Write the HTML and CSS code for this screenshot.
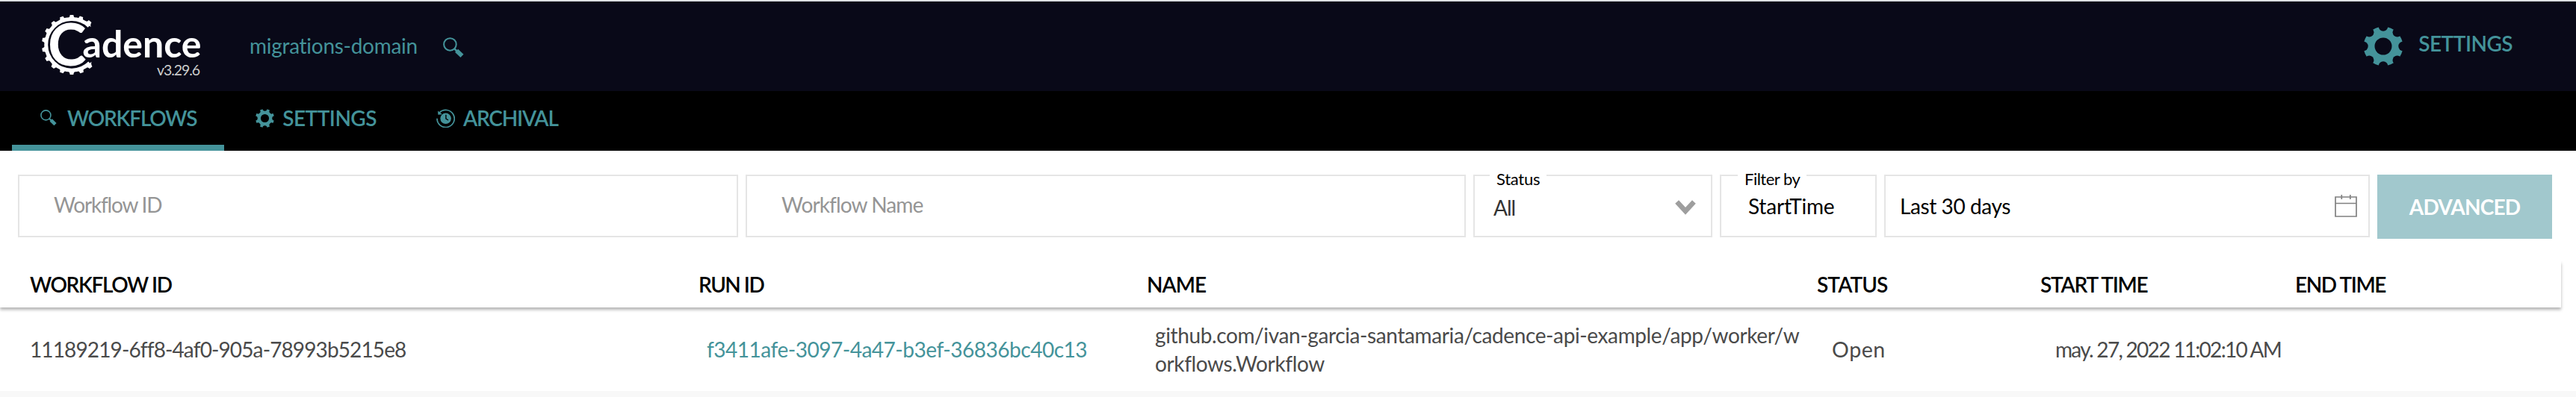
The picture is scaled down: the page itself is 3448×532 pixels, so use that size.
FILE: index.html
```
<!DOCTYPE html>
<html lang="en">
<head>
<meta charset="utf-8">
<title>Cadence</title>
<link rel="stylesheet" href="styles.css">
</head>
<body>
<svg class="defs" width="0" height="0">
  <defs>
    <mask id="gear-mask" maskUnits="userSpaceOnUse" x="-27" y="-27" width="54" height="54">
      <circle r="26.3" fill="#fff"/>
      <circle r="11.5" fill="#000"/>
      <circle cx="26.5" r="6.2" fill="#000"/>
      <circle cx="26.5" r="6.2" fill="#000" transform="rotate(45)"/>
      <circle cx="26.5" r="6.2" fill="#000" transform="rotate(90)"/>
      <circle cx="26.5" r="6.2" fill="#000" transform="rotate(135)"/>
      <circle cx="26.5" r="6.2" fill="#000" transform="rotate(180)"/>
      <circle cx="26.5" r="6.2" fill="#000" transform="rotate(225)"/>
      <circle cx="26.5" r="6.2" fill="#000" transform="rotate(270)"/>
      <circle cx="26.5" r="6.2" fill="#000" transform="rotate(315)"/>
    </mask>
    <symbol id="gear" viewBox="-26 -26 52 52"><rect x="-27" y="-27" width="54" height="54" mask="url(#gear-mask)"/></symbol>
    <symbol id="search" viewBox="0 0 22 22">
      <circle cx="7.4" cy="7.4" r="6.5" fill="none" stroke="currentColor" stroke-width="1.6"/>
      <path d="M11.8 11.8 15 15" stroke="currentColor" stroke-width="2"/>
      <path d="M14.2 14 20 19.6" stroke="currentColor" stroke-width="4.6"/>
    </symbol>
    <path id="tooth" d="M-5.6-34.5C-3.6-36-2.8-37-2.3-40H2.3C2.8-37 3.6-36 5.6-34.5Z"/>
  </defs>
</svg>
<header class="header">
  <svg class="logo" viewBox="56 18 214 88">
    <path d="M119.4 34.8A34.3 34.3 0 1 0 120 84.4" fill="none" stroke="#fff" stroke-width="5"/>
    <g fill="#fff" transform="translate(96 60)">
      <use href="#tooth" transform="rotate(38)"/><use href="#tooth" transform="rotate(19)"/><use href="#tooth"/>
      <use href="#tooth" transform="rotate(-20)"/><use href="#tooth" transform="rotate(-40)"/><use href="#tooth" transform="rotate(-60)"/>
      <use href="#tooth" transform="rotate(-80)"/><use href="#tooth" transform="rotate(-100)"/><use href="#tooth" transform="rotate(-120)"/>
      <use href="#tooth" transform="rotate(-140)"/><use href="#tooth" transform="rotate(-160)"/><use href="#tooth" transform="rotate(-180)"/>
      <use href="#tooth" transform="rotate(-200)"/><use href="#tooth" transform="rotate(-220)"/>
    </g>
    <text class="logo-c" x="64" y="87.8">C</text>
    <text class="logo-word" x="110.500" y="76.5" textLength="159">adence</text>
    <text class="logo-version" x="210" y="100.5" textLength="58">v3.29.6</text>
  </svg>
  <a class="domain"><span class="t-domain">migrations-domain</span></a>
  <svg class="domain-search"><use href="#search"/></svg>
  <a class="global-settings"><svg class="gear-lg"><use href="#gear"/></svg><span class="t-settings">SETTINGS</span></a>
</header>
<nav class="tabs">
  <a class="tab tab-active"><svg class="tab-search"><use href="#search"/></svg><span class="t-workflows">WORKFLOWS</span></a>
  <a class="tab"><svg class="tab-gear"><use href="#gear"/></svg><span class="t-settings">SETTINGS</span></a>
  <a class="tab"><svg class="tab-clock" viewBox="0 0 25 25">
    <path d="M1 12.7A11.6 11.6 0 1 0 4.3 4.9" fill="none" stroke="currentColor" stroke-width="1.7"/>
    <path d="M2 2.6 2.4 7.8 8 7.2Z"/>
    <circle cx="12.6" cy="12.8" r="7.3"/>
    <path d="M12.9 7.8V13.2L16 15" fill="none" stroke="#000" stroke-width="1.4"/>
  </svg><span class="t-archival">ARCHIVAL</span></a>
</nav>
<section class="filters">
  <div class="field wide"><span class="t-wid">Workflow ID</span></div>
  <div class="field wide"><span class="t-wname">Workflow Name</span></div>
  <div class="field status"><label class="legend"><span class="t-status">Status</span></label><span class="t-all">All</span>
    <svg class="chevron" viewBox="0 0 28 20"><path d="M2.6 2.6 14 14.8 25.4 2.6" fill="none" stroke="#9e9e9e" stroke-width="6.6"/></svg></div>
  <div class="field filter-by"><label class="legend"><span class="t-filter">Filter by</span></label><span class="t-start">StartTime</span></div>
  <div class="field range"><span class="t-last">Last 30 days</span>
    <svg class="calendar" viewBox="0 0 30 30"><path d="M1 3H29V29H1ZM1 11.5H29M9.3 0V6M20.8 0V6" fill="none" stroke="#808080" stroke-width="1.7"/></svg></div>
  <button class="advanced"><span class="t-adv">ADVANCED</span></button>
</section>
<section class="results">
  <div class="grid head">
    <div><span class="h-wid">WORKFLOW ID</span></div><div><span class="h-run">RUN ID</span></div><div><span class="h-name">NAME</span></div>
    <div><span class="h-status">STATUS</span></div><div><span class="h-start">START TIME</span></div><div><span class="h-end">END TIME</span></div>
  </div>
  <div class="grid row">
    <div><span class="r-wid">11189219-6ff8-4af0-905a-78993b5215e8</span></div>
    <div class="pad-sm"><a class="r-run">f3411afe-3097-4a47-b3ef-36836bc40c13</a></div>
    <div class="pad-sm"><span class="r-name">github.com/ivan-garcia-santamaria/cadence-api-example/app/worker/w<br>orkflows.Workflow</span></div>
    <div class="pad-lg"><span class="r-status">Open</span></div>
    <div class="pad-lg"><span class="r-start">may. 27, 2022 11:02:10 AM</span></div>
    <div></div>
  </div>
</section>
</body>
</html>
```
FILE: styles.css
```
* { box-sizing: border-box; }
body {
  margin: 0;
  height: 532px;
  overflow: hidden;
  background: #fff;
  color: #000;
  font: 28px/34px Lato, "Noto Sans", sans-serif;
  white-space: nowrap;
}
svg { display: block; fill: currentColor; flex: none; }
.defs { position: absolute; }

.header {
  display: flex;
  align-items: center;
  height: 122px;
  padding: 0 85px 0 56px;
  border-top: 2px solid #dcdfe1;
  background: #090918;
  color: #44939a;
}
.logo { width: 214px; height: 88px; overflow: visible; }
.logo text { fill: #fff; }
.logo .logo-c { font-size: 78px; font-weight: 700; }
.logo .logo-word { font-size: 50px; font-weight: 700; }
.logo .logo-version { font-size: 19.5px; fill: #ccc; }
.domain { margin: 0 34px 2px 64px; }
.domain-search { width: 28px; height: 28px; margin-top: 3px; }
.global-settings { display: flex; align-items: center; gap: 21px; margin-left: auto; font-weight: 600; }
.global-settings span { margin-bottom: 8px; }
.gear-lg { width: 52px; height: 52px; }

.tabs {
  display: flex;
  height: 80px;
  padding-left: 16px;
  background: #000;
  color: #44939a;
  font-weight: 600;
}
.tab { display: flex; align-items: center; gap: 11px; height: 80px; margin-right: 4px; padding: 0 38px; border-bottom: 8px solid transparent; }
.tab-active { gap: 14px; padding-right: 37px; border-color: #44939a; }
.tab-search { width: 22px; height: 22px; }
.tab-gear, .tab-clock { width: 25px; height: 25px; }

.filters { display: flex; gap: 10px; padding: 32px 32px 0 24px; height: 148px; }
.field { position: relative; display: flex; align-items: center; height: 84px; border: 2px solid #e5e5e5; }
.wide { width: 964px; padding: 0 0 5px 46px; color: #959595; }
.status { width: 320px; padding: 4px 20px 0 25px; justify-content: space-between; color: #333; }
.filter-by { width: 210px; padding-left: 36px; }
.range { width: 650px; padding: 0 15px 0 19px; justify-content: space-between; }
.legend { position: absolute; top: -11px; left: 20px; height: 30px; padding: 0 9px; background: #fff; color: #000; font-size: 22px; line-height: 30px; }
.filter-by .legend { left: 22px; }
.chevron { width: 28px; height: 20px; }
.calendar { width: 30px; height: 30px; }
.advanced { width: 234px; height: 86px; padding: 0; border: 0; background: #a1c8cd; color: #fff; font: inherit; font-weight: 700; }

.grid { display: grid; grid-template-columns: 895px 600px 897px 299px 341px 356px; align-items: center; padding-left: 40px; }
.head { position: relative; width: 3428px; height: 62px; font-weight: 600; box-shadow: 0 3px 4px rgba(0, 0, 0, .3); clip-path: inset(0 -6px -10px 0); }
.row { height: 120px; border-bottom: 8px solid #f8f8f8; color: #4a4a4a; line-height: 38px; }
.pad-sm { padding-left: 11px; }
.pad-lg { padding-left: 20px; }

.t-domain { letter-spacing: -.28px; }
.t-settings { letter-spacing: -.53px; }
.t-workflows { letter-spacing: -1.2px; }
.t-archival { letter-spacing: -1.2px; }
.t-wid { letter-spacing: -1.2px; }
.t-wname { letter-spacing: -.9px; }
.t-status { letter-spacing: -.25px; }
.t-filter { letter-spacing: -.5px; }
.t-start { letter-spacing: -.2px; }
.t-last { letter-spacing: -.4px; }
.t-all { letter-spacing: -1px; }
.t-adv { letter-spacing: -.8px; }
.h-wid { letter-spacing: -1.4px; }
.h-run { letter-spacing: -1.5px; }
.h-name { letter-spacing: -1px; }
.h-status { letter-spacing: -.9px; }
.h-start { letter-spacing: -1.2px; }
.h-end { letter-spacing: -1.4px; }
.r-wid { letter-spacing: -.88px; }
.r-run { letter-spacing: -.48px; color: #44939a; }
.r-name { letter-spacing: -.38px; }
.r-status { letter-spacing: .6px; font-size: 28.5px; }
.r-start { letter-spacing: -1.7px; }
```
